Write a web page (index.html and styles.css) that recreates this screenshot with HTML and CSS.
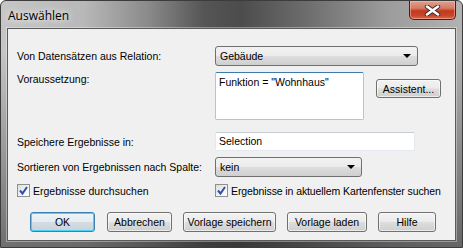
FILE: index.html
```html
<!DOCTYPE html>
<html lang="de">
  <head>
    <meta charset="UTF-8" />
    <title>Auswählen</title>
    <link rel="stylesheet" href="styles.css">
  </head>
  <body>
    <div class="window">
      <div class="titlebar">
        <span class="title">Auswählen</span>
        <div class="close">
          <svg width="17" height="11" viewBox="0 0 17 11">
            <path d="M3 1.5 L14 9.5 M14 1.5 L3 9.5" stroke="#3a2a28" stroke-width="4.4" stroke-linecap="round" />
            <path d="M3 1.5 L14 9.5 M14 1.5 L3 9.5" stroke="#fff" stroke-width="2.6" stroke-linecap="round" />
          </svg>
        </div>
      </div>
      <div class="client">
        <div class="row row-relation">
          <span class="label">Von Datensätzen aus Relation:</span>
          <div class="combo combo-wide"><span>Gebäude</span><span class="arrow"></span></div>
        </div>
        <div class="row row-cond">
          <span class="label label-top">Voraussetzung:</span>
          <div class="textarea">Funktion = "Wohnhaus"</div>
          <button class="btn btn-assist">Assistent...</button>
        </div>
        <div class="row row-save">
          <span class="label">Speichere Ergebnisse in:</span>
          <div class="textbox">Selection</div>
        </div>
        <div class="row row-sort">
          <span class="label">Sortieren von Ergebnissen nach Spalte:</span>
          <div class="combo combo-short"><span>kein</span><span class="arrow"></span></div>
        </div>
        <div class="row row-checks">
          <div class="check check-first">
            <span class="box">
              <svg width="11" height="11" viewBox="0 0 11 11"><path d="M2 5.5 L4.5 8.5 L9 2" fill="none" stroke="#2f4fae" stroke-width="2" /></svg>
            </span>
            <span>Ergebnisse durchsuchen</span>
          </div>
          <div class="check check-map">
            <span class="box">
              <svg width="11" height="11" viewBox="0 0 11 11"><path d="M2 5.5 L4.5 8.5 L9 2" fill="none" stroke="#2f4fae" stroke-width="2" /></svg>
            </span>
            <span>Ergebnisse in aktuellem Kartenfenster suchen</span>
          </div>
        </div>
        <div class="row row-buttons">
          <button class="btn btn-default btn-ok">OK</button>
          <button class="btn btn-cancel">Abbrechen</button>
          <button class="btn btn-save">Vorlage speichern</button>
          <button class="btn btn-load">Vorlage laden</button>
          <button class="btn btn-help">Hilfe</button>
        </div>
      </div>
    </div>
  </body>
</html>
```

FILE: styles.css
```css
html,
body {
  margin: 0;
  padding: 0;
  background: #fff;
}
.window {
  width: 463px;
  height: 248px;
  box-sizing: border-box;
  display: flex;
  flex-direction: column;
  border: 1px solid #3c3c3c;
  border-radius: 6px 6px 0 0;
  background:
    linear-gradient(180deg, rgba(0, 0, 0, 0) 20%, rgba(40, 40, 40, 0.55) 100%),
    linear-gradient(90deg, #c6c6c6 0%, #b8b8b8 18%, #8a8a8a 32%, #555 44%, #4c4c4c 52%, #6c6c6c 66%, #9c9c9c 84%, #b2b2b2 100%);
}
.titlebar {
  height: 27px;
  display: flex;
  align-items: flex-start;
  padding: 0 6px 0 7px;
}
.title {
  margin-top: 6px;
  font-family: "Open Sans", sans-serif;
  font-size: 12px;
  color: #000;
  text-shadow: 0 0 6px rgba(255, 255, 255, 0.9), 0 0 10px rgba(255, 255, 255, 0.7);
}
.close {
  margin-left: auto;
  width: 45px;
  height: 18px;
  display: flex;
  align-items: center;
  justify-content: center;
  border: 1px solid #4a1e16;
  border-top: none;
  border-radius: 0 0 5px 5px;
  background: linear-gradient(180deg, #e0a090 0%, #d47a64 40%, #c2391c 55%, #c8452a 80%, #d86a4c 100%);
  box-shadow: inset 0 0 0 1px rgba(255, 200, 180, 0.5);
}
.client {
  flex: 1;
  margin: 0 6px 6px 6px;
  padding: 17px 0 0 9px;
  background: #f0f0f0;
  border: 1px solid #5a5a5a;
  box-shadow: 0 0 0 1px rgba(255, 255, 255, 0.35);
  font-family: "Liberation Sans", Arial, sans-serif;
  font-size: 10.5px;
  color: #000;
  white-space: nowrap;
}
.row {
  display: flex;
  align-items: center;
}
.label {
  width: 198px;
  flex-shrink: 0;
}
.label-top {
  align-self: flex-start;
  margin-top: 1px;
}
.row-relation {
  height: 20px;
}
.row-cond {
  margin-top: 6px;
  height: 48px;
  align-items: flex-start;
}
.row-save {
  margin-top: 12px;
  height: 19px;
}
.row-sort {
  margin-top: 6px;
  height: 20px;
}
.row-checks {
  margin-top: 7px;
  height: 13px;
}
.row-buttons {
  margin-top: 15px;
  padding-left: 13px;
  gap: 11px;
}
.combo {
  height: 20px;
  box-sizing: border-box;
  display: flex;
  align-items: center;
  padding: 0 6px 0 4px;
  border: 1px solid #707070;
  border-radius: 3px;
  background: linear-gradient(180deg, #f2f2f2 0%, #ebebeb 48%, #dddddd 52%, #cfcfcf 100%);
}
.combo-wide {
  width: 203px;
}
.combo-short {
  width: 147px;
}
.arrow {
  margin-left: auto;
  width: 0;
  height: 0;
  border-left: 4px solid transparent;
  border-right: 4px solid transparent;
  border-top: 4px solid #000;
}
.textarea {
  width: 149px;
  height: 48px;
  box-sizing: border-box;
  padding: 3px 3px;
  background: #fff;
  border: 1px solid #a4c9e3;
  border-top-color: #3d7bad;
  border-radius: 2px;
}
.textbox {
  width: 200px;
  height: 19px;
  box-sizing: border-box;
  padding: 2px 3px;
  background: #fff;
  border: 1px solid #e3e9ef;
  border-top-color: #c8cdd3;
  border-radius: 2px;
}
.btn {
  height: 19px;
  box-sizing: border-box;
  padding: 0;
  font-family: "Liberation Sans", Arial, sans-serif;
  font-size: 10.5px;
  color: #000;
  border: 1px solid #707070;
  border-radius: 3px;
  background: linear-gradient(180deg, #f2f2f2 0%, #ebebeb 48%, #dddddd 52%, #cfcfcf 100%);
  box-shadow: inset 0 0 0 1px rgba(255, 255, 255, 0.6);
}
.btn-assist {
  width: 65px;
  margin: 7px 0 0 12px;
}
.btn-default {
  border-color: #3c7fb1;
  box-shadow: inset 0 0 0 1px #48d4f9;
  background: linear-gradient(180deg, #eef4f7 0%, #e4ecf1 48%, #d4dde3 52%, #c8d2d8 100%);
}
.btn-ok {
  width: 65px;
  height: 20px;
  margin-right: 1px;
}
.btn-cancel {
  width: 65px;
  height: 20px;
}
.btn-save {
  width: 93px;
  height: 20px;
}
.btn-load {
  width: 80px;
  height: 20px;
}
.btn-help {
  width: 58px;
  height: 20px;
}
.check {
  display: flex;
  align-items: center;
  gap: 3px;
}
.check-first {
  width: 198px;
}
.check-map {
  letter-spacing: -0.1px;
}
.box {
  width: 13px;
  height: 13px;
  box-sizing: border-box;
  display: flex;
  align-items: center;
  justify-content: center;
  border: 1px solid #8e8f8f;
  background: linear-gradient(135deg, #dcdcdc 0%, #f4f4f4 60%, #fff 100%);
}
```
